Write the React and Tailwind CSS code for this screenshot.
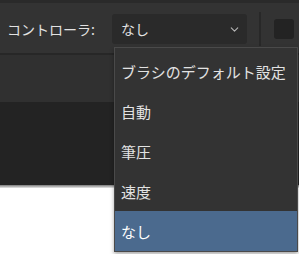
import { ChevronDown } from "lucide-react";

const options = ["ブラシのデフォルト設定", "自動", "筆圧", "速度", "なし"];

const App = () => {
  const selected = "なし";

  return (
    <div
      className="relative w-[299px] h-[254px] overflow-hidden bg-white text-[#e2e2e2]"
      style={{ fontFamily: '"Noto Sans CJK JP", "Noto Sans", sans-serif' }}
    >
      <div className="h-[3px] bg-[#2a2a2a]" />
      <div className="h-[50px] bg-[#333333] flex items-center pl-[7px] pt-[2px]">
        <span className="text-[14px] leading-none">コントローラ:</span>
        <div className="ml-[17px] w-[135px] h-[30px] rounded-[3px] bg-[#2a2a2a] flex items-center justify-between pl-[9px] pr-[6px]">
          <span className="text-[14px] leading-none">{selected}</span>
          <ChevronDown size={13} strokeWidth={2} className="text-[#b5b5b5]" />
        </div>
        <div className="ml-[12px] w-[2px] h-[34px] bg-[#282828]" />
        <div className="ml-[13px] w-[20px] h-[20px] rounded-[3px] bg-[#232323]" />
      </div>
      <div className="h-[2px] bg-[#272727]" />
      <div className="h-[47px] bg-[#303030]" />
      <div className="h-[83px] bg-[#232323]" />
      <div className="h-[3px] bg-gradient-to-b from-[#7a7a7a] to-[#e8e8e8]" />

      <div className="absolute left-[114px] top-[47px] w-[184px] border border-[#4a4a4a] bg-[#333333] pt-[3px] shadow-[0_2px_4px_rgba(0,0,0,0.35)]">
        {options.map((opt) => (
          <div
            key={opt}
            className={`h-10 flex items-center pl-[6px] text-[15px] leading-none ${
              opt === selected ? "bg-[#4b6a8e] text-white" : ""
            }`}
          >
            {opt}
          </div>
        ))}
      </div>
    </div>
  );
};

export default App;
